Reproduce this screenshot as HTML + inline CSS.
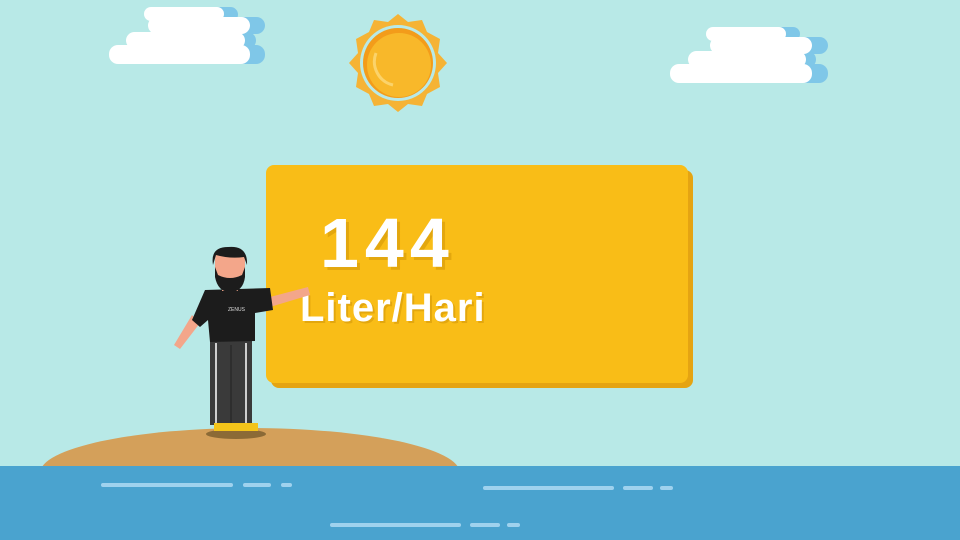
<!DOCTYPE html><html><head><style>
body{margin:0;width:960px;height:540px;overflow:hidden;background:#b8e9e7;position:relative;font-family:"Liberation Sans",sans-serif}
.a{position:absolute}
.cb{position:absolute;background:#fff;border-radius:9px}
.cs{position:absolute;background:#7fc7e8;border-radius:9px}
.l{position:absolute;height:4px;background:#9fd2ee;border-radius:2px}
</style></head><body>
<div class="cs" style="left:160px;top:7px;width:78px;height:15px"></div>
<div class="cs" style="left:165px;top:17px;width:100px;height:17px"></div>
<div class="cs" style="left:140px;top:32px;width:116px;height:17px"></div>
<div class="cs" style="left:125px;top:45px;width:140px;height:19px"></div>
<div class="cb" style="left:144px;top:7px;width:80px;height:14px"></div>
<div class="cb" style="left:148px;top:17px;width:102px;height:17px"></div>
<div class="cb" style="left:126px;top:32px;width:119px;height:17px"></div>
<div class="cb" style="left:109px;top:45px;width:141px;height:19px"></div>
<div class="cs" style="left:722px;top:27px;width:78px;height:14px"></div>
<div class="cs" style="left:728px;top:37px;width:100px;height:17px"></div>
<div class="cs" style="left:702px;top:51px;width:114px;height:17px"></div>
<div class="cs" style="left:688px;top:64px;width:140px;height:19px"></div>
<div class="cb" style="left:706px;top:27px;width:80px;height:14px"></div>
<div class="cb" style="left:710px;top:37px;width:102px;height:17px"></div>
<div class="cb" style="left:688px;top:51px;width:118px;height:17px"></div>
<div class="cb" style="left:670px;top:64px;width:142px;height:19px"></div>
<svg class="a" style="left:348px;top:13px" width="100" height="100" viewBox="-50 -50 100 100">
<polygon fill="#f5b335" points="0,-49 10,-41 24,-43 29,-31 42,-24 40,-10 49,0 40,10 42,24 29,31 24,43 10,41 0,49 -10,41 -24,43 -29,31 -42,24 -40,10 -49,0 -40,-10 -42,-24 -29,-31 -24,-43 -10,-41"/>
<circle r="38" fill="#b8e9e7"/><circle r="35" fill="#f39c1a"/><circle r="32" cx="1" cy="2" fill="#f8b82a"/>
<path d="M-22,-10 A24 24 0 0 0 -5 22" stroke="#fbd36a" stroke-width="3" fill="none"/>
</svg>
<div class="a" style="left:271px;top:170px;width:422px;height:218px;background:#e5a412;border-radius:8px"></div>
<div class="a" style="left:266px;top:165px;width:422px;height:218px;background:#f9bd17;border-radius:8px"></div>
<div class="a" style="left:320px;top:203px;font-size:70px;line-height:80px;font-weight:bold;color:#fff;letter-spacing:6px;text-shadow:3px 3px 0 #e3a70e">144</div>
<div class="a" style="left:300px;top:285px;font-size:40px;line-height:46px;font-weight:bold;color:#fff;letter-spacing:1px;text-shadow:2px 2px 0 #e3a70e">Liter/Hari</div>
<div class="a" style="left:40px;top:428px;width:420px;height:90px;background:#d4a05a;border-radius:50%"></div>
<div class="a" style="left:0;top:466px;width:960px;height:74px;background:#4aa3cf"></div>
<div class="l" style="left:101px;top:483px;width:132px"></div><div class="l" style="left:243px;top:483px;width:28px"></div><div class="l" style="left:281px;top:483px;width:11px"></div>
<div class="l" style="left:483px;top:486px;width:131px"></div><div class="l" style="left:623px;top:486px;width:30px"></div><div class="l" style="left:660px;top:486px;width:13px"></div>
<div class="l" style="left:330px;top:523px;width:131px"></div><div class="l" style="left:470px;top:523px;width:30px"></div><div class="l" style="left:507px;top:523px;width:13px"></div>
<svg class="a" style="left:170px;top:245px" width="145" height="200">
<ellipse cx="66" cy="189" rx="30" ry="5" fill="#8b6a36"/>
<path d="M100,52 L138,42 L140,50 L100,62Z" fill="#f3a68a"/>
<path d="M22,70 L4,100 L10,104 L30,78Z" fill="#f3a68a"/>
<rect x="40" y="95" width="42" height="85" fill="#3a3a3a"/>
<line x1="46" y1="98" x2="46" y2="178" stroke="#fff" stroke-width="1.5"/><line x1="76" y1="98" x2="76" y2="178" stroke="#fff" stroke-width="1.5"/>
<line x1="61" y1="100" x2="61" y2="178" stroke="#222"/>
<path d="M35,45 L100,43 L103,65 L85,68 L85,96 L40,97 L38,75 L30,82 L22,75Z" fill="#1c1c1c"/>
<text x="58" y="66" font-size="5" fill="#ddd">ZENUS</text>
<rect x="52" y="32" width="16" height="14" fill="#f3a68a"/>
<path d="M45,16 Q45,3 60,3 Q76,3 75,18 L75,30 Q72,45 60,46 Q47,45 45,30Z" fill="#f3a68a"/>
<path d="M45,22 L45,32 Q48,47 60,47 Q73,47 75,32 L75,22 L72,30 Q60,36 48,30Z" fill="#1c1c1c"/>
<path d="M43,20 Q40,2 58,2 Q78,0 77,20 L74,12 Q60,14 46,10Z" fill="#1c1c1c"/>
<rect x="44" y="178" width="44" height="8" fill="#f3c41a"/>
</svg>
</body></html>
